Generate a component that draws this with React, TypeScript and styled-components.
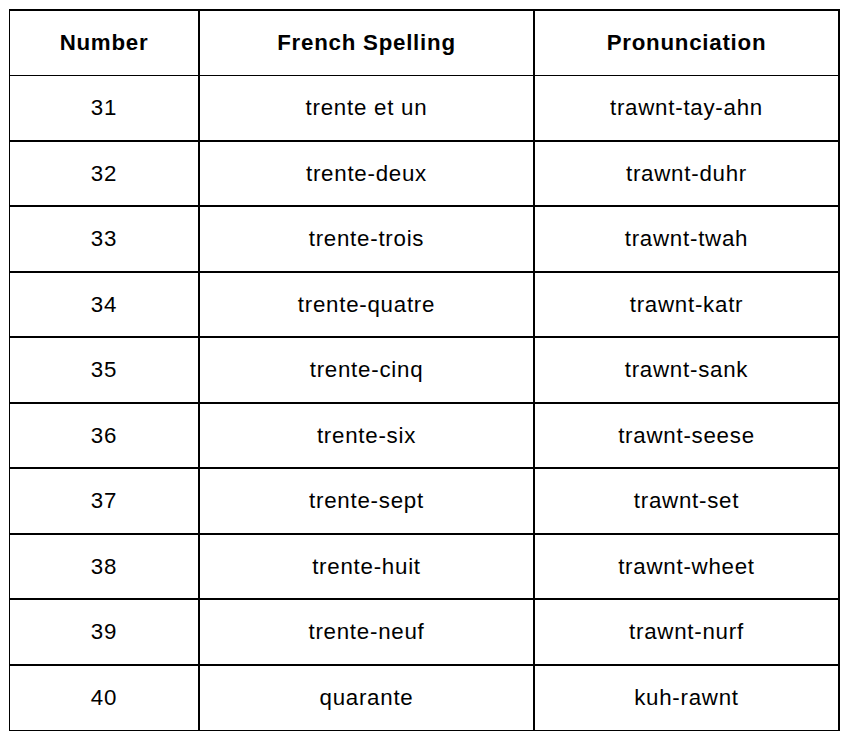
import React from "react";
import styled, { createGlobalStyle } from "styled-components";

const GlobalStyle = createGlobalStyle`
  html, body {
    margin: 0;
    padding: 0;
    background: #ffffff;
  }
  body {
    font-family: "Liberation Sans", Arial, sans-serif;
    color: #000000;
  }
`;

const Page = styled.div`
  padding: 9px 0 0 9px;
`;

const Table = styled.table`
  width: 831px;
  table-layout: fixed;
  border-collapse: separate;
  border-spacing: 0;
  border-top: 2px solid #000;
  border-left: 1px solid #000;
  font-size: 22.3px;
  letter-spacing: 0.75px;
`;

const Col = styled.col<{ $w: number }>`
  width: ${(p) => p.$w}px;
`;

const Row = styled.tr<{ $h: number }>`
  height: ${(p) => p.$h}px;
`;

const Cell = styled.td<{ $thinBottom?: boolean }>`
  box-sizing: border-box;
  padding: 0;
  text-align: center;
  vertical-align: middle;
  border-right: 2px solid #000;
  border-bottom: ${(p) => (p.$thinBottom ? "1px" : "2px")} solid #000;
  font-weight: 400;
`;

const HeadCell = styled(Cell).attrs({ as: "th" })`
  font-weight: 700;
`;

const rows: [string, string, string][] = [
  ["31", "trente et un", "trawnt-tay-ahn"],
  ["32", "trente-deux", "trawnt-duhr"],
  ["33", "trente-trois", "trawnt-twah"],
  ["34", "trente-quatre", "trawnt-katr"],
  ["35", "trente-cinq", "trawnt-sank"],
  ["36", "trente-six", "trawnt-seese"],
  ["37", "trente-sept", "trawnt-set"],
  ["38", "trente-huit", "trawnt-wheet"],
  ["39", "trente-neuf", "trawnt-nurf"],
  ["40", "quarante", "kuh-rawnt"],
];

export default function App() {
  return (
    <Page>
      <GlobalStyle />
      <Table>
        <colgroup>
          <Col $w={190} />
          <Col $w={335} />
          <Col $w={305} />
        </colgroup>
        <thead>
          <Row $h={65}>
            <HeadCell $thinBottom>Number</HeadCell>
            <HeadCell $thinBottom>French Spelling</HeadCell>
            <HeadCell $thinBottom>Pronunciation</HeadCell>
          </Row>
        </thead>
        <tbody>
          {rows.map(([num, fr, pr], i) => {
            const last = i === rows.length - 1;
            return (
              <Row key={num} $h={i % 2 === 0 ? 66 : 65}>
                <Cell $thinBottom={last}>{num}</Cell>
                <Cell $thinBottom={last}>{fr}</Cell>
                <Cell $thinBottom={last}>{pr}</Cell>
              </Row>
            );
          })}
        </tbody>
      </Table>
    </Page>
  );
}
